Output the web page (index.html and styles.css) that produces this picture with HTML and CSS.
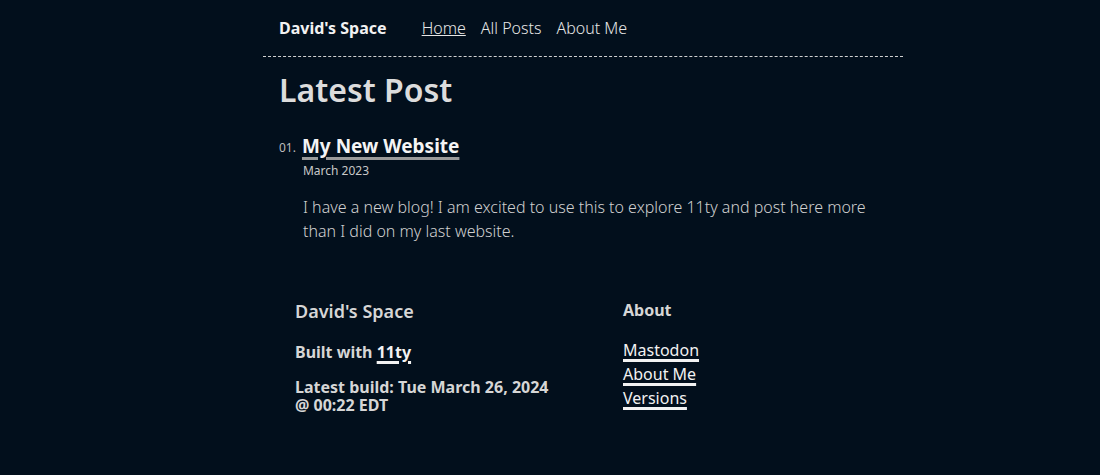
FILE: index.html
```html
<!DOCTYPE html>
<html>
    <head>
        <meta charset="utf-8">
        <link rel="stylesheet" href="styles.css">
        <title>David's Space</title>
    </head>
    <body>
        <div class="page">
            <header class="top">
                <a class="home-link" href="#">David's Space</a>
                <nav class="nav">
                    <a class="nav-item current" href="#">Home</a>
                    <a class="nav-item" href="#">All Posts</a>
                    <a class="nav-item" href="#">About Me</a>
                </nav>
            </header>
            <main class="content">
                <h1 class="heading">Latest Post</h1>
                <ol class="postlist">
                    <li class="post">
                        <span class="num">01.</span>
                        <div class="post-body">
                            <a class="post-title" href="#">My New Website</a>
                            <div class="post-date">March 2023</div>
                            <p class="post-text">I have a new blog! I am excited to use this to explore 11ty and post here more than I did on my last website.</p>
                        </div>
                    </li>
                </ol>
            </main>
            <footer class="foot">
                <div class="foot-col">
                    <h3 class="foot-title">David's Space</h3>
                    <p class="foot-line">Built with <a class="foot-link" href="#">11ty</a></p>
                    <p class="foot-line build">Latest build: Tue March 26, 2024 @ 00:22 EDT</p>
                </div>
                <div class="foot-col">
                    <h4 class="foot-head">About</h4>
                    <a class="foot-link" href="#">Mastodon</a>
                    <a class="foot-link" href="#">About Me</a>
                    <a class="foot-link" href="#">Versions</a>
                </div>
            </footer>
        </div>
    </body>
</html>
```

FILE: styles.css
```css
body {
    margin: 0;
    background: #020f1c;
    color: #d6d6d6;
    font-family: "Noto Sans", "Open Sans", sans-serif;
    font-size: 16px;
}
a {
    color: #f2f2f2;
}
.page {
    width: 640px;
    margin-left: 263px;
}
.top {
    display: flex;
    align-items: center;
    height: 56px;
    padding: 0 16px;
    border-bottom: 1px dashed #d0d0d0;
}
.home-link {
    font-weight: 700;
    text-decoration: none;
    color: #f2f2f2;
    margin-right: 35px;
}
.nav {
    display: flex;
    gap: 15px;
}
.nav-item {
    text-decoration: none;
    color: #e6e6e6;
    font-weight: 300;
}
.nav-item.current {
    text-decoration: underline;
}
.content {
    padding: 0 16px;
}
.heading {
    margin: 11px 0 22px;
    font-size: 32px;
    font-weight: 600;
    color: #dcdcdc;
}
.postlist {
    list-style: none;
    margin: 0;
    padding: 0;
}
.post {
    display: flex;
    gap: 6px;
}
.num {
    font-size: 12px;
    color: #bdbdbd;
    padding-top: 6px;
}
.post-title {
    font-size: 19px;
    font-weight: 700;
    color: #f4f4f4;
    text-decoration: underline;
    text-decoration-color: #9a9a9a;
    text-decoration-thickness: 3px;
    text-underline-offset: 4px;
}
.post-date {
    margin: 3px 0 0 1px;
    font-size: 12px;
    color: #c8c8c8;
}
.post-text {
    margin: 16px 0 0 1px;
    line-height: 24px;
    color: #d0d0d0;
    font-weight: 300;
}
.foot {
    display: grid;
    grid-template-columns: 288px 288px;
    gap: 40px;
    padding: 0 32px;
    margin-top: 56px;
}
.foot-col {
    display: flex;
    flex-direction: column;
    align-items: flex-start;
}
.foot-title {
    margin: 0 0 17px;
    font-size: 18px;
    font-weight: 600;
}
.foot-line {
    margin: 0 0 14px;
    font-weight: 700;
    line-height: 18px;
}
.build {
    width: 262px;
}
.foot-head {
    margin: 0 0 17px;
    font-size: 16px;
    font-weight: 700;
}
.foot-link {
    line-height: 24px;
    text-decoration: underline;
    text-decoration-thickness: 3px;
    text-underline-offset: 3px;
}
```
